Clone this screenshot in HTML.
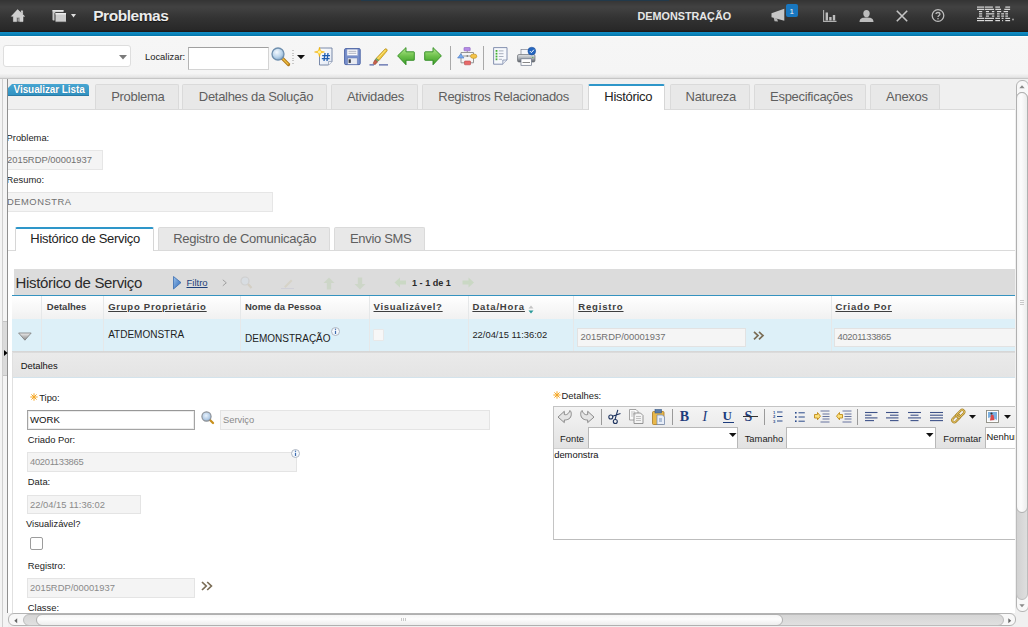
<!DOCTYPE html><html><head><meta charset="utf-8"><style>
html,body{margin:0;padding:0;width:1028px;height:627px;overflow:hidden;background:#fff;font-family:"Liberation Sans",sans-serif;}
.a{position:absolute;box-sizing:border-box;}
.t{position:absolute;line-height:1;white-space:nowrap;}
svg{overflow:visible}
</style></head><body>

<div class="a" style="left:0px;top:0px;width:1028px;height:32px;background:linear-gradient(#343434 0px,#424242 7px,#333 18px,#282828 30px,#1e1b1b 31px,#1e1b1b 32px)"></div>
<div class="a" style="left:361px;top:0px;width:308px;height:1px;background:#22394a"></div>
<div class="a" style="left:0px;top:32px;width:1028px;height:4px;background:linear-gradient(#1290c8,#0a80b6 60%,#0575a8)"></div>
<svg class="a" style="left:11px;top:9px" width="14" height="13" viewBox="0 0 14 13"><path d="M6.6 0.6 L13.6 7.3 L12 7.3 L12 12.6 L8.6 12.6 L8.6 8.6 L5.6 8.6 L5.6 12.6 L2.4 12.6 L2.4 7.3 L0.4 7.3 Z M10.2 1.8 L11.6 1.8 L11.6 5 L10.2 3.6 Z" fill="#cfcfcf" stroke="#e8e8e8" stroke-width="0.5"/><rect x="6.4" y="9.2" width="1.8" height="3.4" fill="#9a9a9a"/></svg>
<svg class="a" style="left:52px;top:9px" width="15" height="14" viewBox="0 0 15 14"><rect x="0.5" y="1" width="11" height="10.5" rx="0.8" fill="#c8c8c8"/><rect x="0.5" y="1" width="11" height="1.4" fill="#e6e6e6"/><rect x="3" y="3.6" width="11.5" height="9.6" rx="0.8" fill="#cdcdcd" stroke="#262626" stroke-width="0.9"/><rect x="3.5" y="4" width="10.5" height="1.5" fill="#ededed"/></svg>
<svg class="a" style="left:71px;top:14px" width="6" height="4" viewBox="0 0 6 4"><path d="M0 0 L5 0 L2.5 3.5 Z" fill="#ddd"/></svg>
<div class="t" style="left:93.2px;top:8.00px;font-size:15.5px;color:#ececec;font-weight:bold;letter-spacing:-0.45px;text-shadow:0 1px 1px #111">Problemas</div>
<div class="t" style="left:637.5px;top:11.00px;font-size:10.8px;color:#e6e6e6;font-weight:bold;">DEMONSTRAÇÃO</div>
<svg class="a" style="left:771px;top:8px" width="14" height="14" viewBox="0 0 14 14"><path d="M0.5 5.3 L13.3 0.7 L13.3 12.7 L0.5 9.3 Z" fill="#c6c6c6"/><path d="M2.6 9.6 L6 10.5 L7 13.6 L3.6 13.2 Z" fill="#b4b4b4"/></svg>
<div class="a" style="left:785.5px;top:4px;width:12.5px;height:13px;background:#1877c0;border-radius:2px"></div>
<div class="t" style="left:789.5px;top:8.00px;font-size:8px;color:#f4f4f4;">1</div>
<svg class="a" style="left:823px;top:10px" width="14" height="12" viewBox="0 0 14 12"><path d="M0.6 0 L0.6 11.4 L13.5 11.4" stroke="#b0b0b0" stroke-width="1.1" fill="none"/><rect x="2.6" y="2.5" width="2.4" height="8" fill="#bdbdbd"/><rect x="6.2" y="7" width="2.4" height="3.5" fill="#bdbdbd"/><rect x="9.8" y="5" width="2.4" height="5.5" fill="#bdbdbd"/></svg>
<svg class="a" style="left:858.5px;top:10px" width="15" height="12" viewBox="0 0 15 12"><ellipse cx="7.5" cy="3.6" rx="3.2" ry="3.6" fill="#bdbdbd"/><path d="M0.5 12 C0.5 8 4 7.5 7.5 7.5 C11 7.5 14.5 8 14.5 12 Z" fill="#bdbdbd"/></svg>
<svg class="a" style="left:896px;top:10px" width="12" height="12" viewBox="0 0 12 12"><path d="M0.8 0.8 L11.2 11.2 M11.2 0.8 L0.8 11.2" stroke="#c4c4c4" stroke-width="1.6"/></svg>
<svg class="a" style="left:930.5px;top:9px" width="14" height="13" viewBox="0 0 14 13"><circle cx="7" cy="6.5" r="5.8" stroke="#bdbdbd" stroke-width="1.3" fill="none"/><path d="M5 5 C5 3 9 3 9 5 C9 6.5 7 6.5 7 8" stroke="#bdbdbd" stroke-width="1.3" fill="none"/><circle cx="7" cy="9.8" r="0.8" fill="#bdbdbd"/></svg>
<svg class="a" style="left:977px;top:0px" width="38" height="22" viewBox="0 0 38 22"><rect x="0.0" y="6.50" width="7.1" height="1.2" fill="#dadada"/><rect x="7.8" y="6.50" width="8.1" height="1.2" fill="#dadada"/><rect x="18.3" y="6.50" width="4.7" height="1.2" fill="#dadada"/><rect x="28.3" y="6.50" width="4.8" height="1.2" fill="#dadada"/><rect x="0.0" y="8.75" width="7.1" height="1.2" fill="#dadada"/><rect x="7.8" y="8.75" width="9.2" height="1.2" fill="#dadada"/><rect x="18.3" y="8.75" width="5.7" height="1.2" fill="#dadada"/><rect x="27.3" y="8.75" width="5.8" height="1.2" fill="#dadada"/><rect x="2.0" y="11.00" width="3.2" height="1.2" fill="#dadada"/><rect x="8.9" y="11.00" width="3.1" height="1.2" fill="#dadada"/><rect x="14.9" y="11.00" width="2.4" height="1.2" fill="#dadada"/><rect x="20.0" y="11.00" width="4.2" height="1.2" fill="#dadada"/><rect x="26.6" y="11.00" width="4.4" height="1.2" fill="#dadada"/><rect x="2.0" y="13.25" width="3.2" height="1.2" fill="#dadada"/><rect x="8.9" y="13.25" width="8.4" height="1.2" fill="#dadada"/><rect x="20.0" y="13.25" width="2.7" height="1.2" fill="#dadada"/><rect x="24.2" y="13.25" width="2.9" height="1.2" fill="#dadada"/><rect x="28.3" y="13.25" width="2.7" height="1.2" fill="#dadada"/><rect x="2.0" y="15.50" width="3.2" height="1.2" fill="#dadada"/><rect x="8.9" y="15.50" width="3.1" height="1.2" fill="#dadada"/><rect x="14.9" y="15.50" width="2.4" height="1.2" fill="#dadada"/><rect x="20.0" y="15.50" width="2.7" height="1.2" fill="#dadada"/><rect x="24.2" y="15.50" width="2.9" height="1.2" fill="#dadada"/><rect x="28.3" y="15.50" width="2.7" height="1.2" fill="#dadada"/><rect x="0.0" y="17.75" width="7.1" height="1.2" fill="#dadada"/><rect x="7.8" y="17.75" width="9.2" height="1.2" fill="#dadada"/><rect x="18.3" y="17.75" width="4.7" height="1.2" fill="#dadada"/><rect x="24.6" y="17.75" width="2.0" height="1.2" fill="#dadada"/><rect x="28.3" y="17.75" width="4.8" height="1.2" fill="#dadada"/><rect x="0.0" y="20.00" width="7.1" height="1.2" fill="#dadada"/><rect x="7.8" y="20.00" width="8.1" height="1.2" fill="#dadada"/><rect x="18.3" y="20.00" width="4.7" height="1.2" fill="#dadada"/><rect x="25.1" y="20.00" width="1.0" height="1.2" fill="#dadada"/><rect x="28.3" y="20.00" width="4.8" height="1.2" fill="#dadada"/><circle cx="36" cy="19.5" r="0.9" fill="#aaa"/></svg>
<div class="a" style="left:0px;top:36px;width:1028px;height:43px;background:linear-gradient(#fff 0,#fff 1px,#f6f6f6 1px,#f5f5f5 37.5px,#e6e6e6 41px,#dadada 42px,#c6c6c6 42px)"></div>
<div class="a" style="left:3px;top:45px;width:128px;height:22px;background:#fff;border:1px solid #dedede;border-radius:3px"></div>
<svg class="a" style="left:119px;top:54.5px" width="8" height="5" viewBox="0 0 8 5"><path d="M0 0 L8 0 L4 4.5 Z" fill="#7a7a7a"/></svg>
<div class="t" style="left:145px;top:52.00px;font-size:9.4px;color:#222;">Localizar:</div>
<div class="a" style="left:188px;top:47px;width:81px;height:23px;background:#fff;border:1px solid #d4d4d4;border-top-color:#a0a0a0;border-left-color:#b4b4b4"></div>
<svg class="a" style="left:270.5px;top:46.5px" width="19" height="19" viewBox="0 0 19 19"><defs><radialGradient id="mg1" cx="0.4" cy="0.35" r="0.7"><stop offset="0" stop-color="#f4f9ff"/><stop offset="0.6" stop-color="#b9d3ea"/><stop offset="1" stop-color="#7fa3c6"/></radialGradient></defs>
    <path d="M11 11 L17.5 17.5" stroke="#b07818" stroke-width="3.2" stroke-linecap="round"/>
    <path d="M11.5 11.5 L17 17" stroke="#f0c040" stroke-width="1.4" stroke-linecap="round"/>
    <circle cx="7" cy="7" r="6" fill="url(#mg1)" stroke="#6f8fae" stroke-width="1.3"/></svg>
<div class="a" style="left:292px;top:50.0px;width:1.5px;height:1.0px;background:#c8c8c8"></div>
<div class="a" style="left:292px;top:52.5px;width:1.5px;height:1.0px;background:#c8c8c8"></div>
<div class="a" style="left:292px;top:55.0px;width:1.5px;height:1.0px;background:#c8c8c8"></div>
<div class="a" style="left:292px;top:57.5px;width:1.5px;height:1.0px;background:#c8c8c8"></div>
<div class="a" style="left:292px;top:60.0px;width:1.5px;height:1.0px;background:#c8c8c8"></div>
<div class="a" style="left:292px;top:62.5px;width:1.5px;height:1.0px;background:#c8c8c8"></div>
<svg class="a" style="left:297px;top:55px" width="8" height="5" viewBox="0 0 8 5"><path d="M0 0 L8 0 L4 4.3 Z" fill="#111"/></svg>
<svg class="a" style="left:313.5px;top:46.5px" width="20" height="19" viewBox="0 0 20 19"><defs><linearGradient id="pg" x1="0" y1="0" x2="1" y2="1"><stop offset="0" stop-color="#ffffff"/><stop offset="1" stop-color="#dfe6f2"/></linearGradient></defs>
    <path d="M5.5 1 L18 1 L18 14.5 L14.5 18 L5.5 18 Z" fill="url(#pg)" stroke="#6d7fa0" stroke-width="0.9"/>
    <path d="M14.5 18 L14.5 14.5 L18 14.5" fill="#f2f4f8" stroke="#8a98b0" stroke-width="0.7"/>
    <path d="M11 6 L10 14 M14 6 L13 14 M8.2 8.6 L16 8.6 M7.8 11.6 L15.6 11.6" stroke="#1e5cb0" stroke-width="1.3"/>
    <path d="M5.5 0.2 L6.6 3.9 L10.5 5 L6.6 6.1 L5.5 9.8 L4.4 6.1 L0.5 5 L4.4 3.9 Z" fill="#ffd21e" stroke="#f0a800" stroke-width="0.5"/>
    <circle cx="5.5" cy="5" r="1.6" fill="#fff3a0"/></svg>
<svg class="a" style="left:343.5px;top:48px" width="17" height="17.5" viewBox="0 0 17 17.5"><rect x="0.6" y="0.6" width="15.6" height="16" rx="1.2" fill="#7890cc" stroke="#4f66a6" stroke-width="1"/>
    <rect x="3" y="1.2" width="10.8" height="6.4" fill="#fbfbfd" stroke="#8a9ac4" stroke-width="0.5"/>
    <path d="M4.5 3.3 L12.3 3.3 M4.5 5.3 L12.3 5.3" stroke="#9aa0b0" stroke-width="0.8"/>
    <rect x="3.6" y="10" width="9.6" height="6.3" fill="#e8ebf2" stroke="#6a7cb4" stroke-width="0.5"/>
    <rect x="4.6" y="11.3" width="2.2" height="3.6" fill="#3a3f4a"/></svg>
<svg class="a" style="left:368.5px;top:46.5px" width="20" height="19" viewBox="0 0 20 19"><path d="M0.5 17.8 L5 17.8 M10 17.8 L19 17.8" stroke="#5566a8" stroke-width="1.3"/>
    <path d="M7 11.5 L16 2 C17 1 19 2.8 18 4 L10 13.5 Z" fill="#f0c838" stroke="#b08a20" stroke-width="0.7"/>
    <path d="M7.3 11.3 L9.8 13.3 L8.5 14.8 L6 12.8 Z" fill="#7ab070" stroke="#4a7a40" stroke-width="0.4"/>
    <path d="M6 12.8 L8.5 14.8 L7 16.8 C5.8 18.2 3.6 17 4.5 15.5 Z" fill="#c8604a" stroke="#8e3a28" stroke-width="0.6"/>
    <path d="M8.5 12 L16.5 3" stroke="#fae690" stroke-width="0.9"/></svg>
<svg class="a" style="left:396.5px;top:46.5px" width="18" height="19" viewBox="0 0 18 19"><defs><linearGradient id="ga" x1="0" y1="0" x2="0" y2="1"><stop offset="0" stop-color="#b4e890"/><stop offset="0.5" stop-color="#6cc04a"/><stop offset="1" stop-color="#3a9a28"/></linearGradient></defs>
    <path d="M0.6 8.8 L9 0.6 L9 4.8 L16.8 4.8 Q17.3 4.8 17.3 5.3 L17.3 12.8 Q17.3 13.3 16.8 13.3 L9 13.3 L9 17.8 Z" fill="url(#ga)" stroke="#2e8a20" stroke-width="0.9" stroke-linejoin="round"/></svg>
<svg class="a" style="left:423.5px;top:46.5px" width="18" height="19" viewBox="0 0 18 19"><path d="M17.4 8.8 L9 0.6 L9 4.8 L1.2 4.8 Q0.7 4.8 0.7 5.3 L0.7 12.8 Q0.7 13.3 1.2 13.3 L9 13.3 L9 17.8 Z" fill="url(#ga)" stroke="#2e8a20" stroke-width="0.9" stroke-linejoin="round"/></svg>
<div class="a" style="left:450px;top:46px;width:1.3000000000000114px;height:24px;background:#a9a9a9"></div>
<svg class="a" style="left:456.5px;top:46.5px" width="21" height="20" viewBox="0 0 21 20"><path d="M4 5.5 L16.5 5.5 L16.5 15.8 L4 15.8 Z M10.25 3.5 L10.25 5.5 M6 9 L14.5 9" stroke="#8c8c8c" stroke-width="0.9" fill="none"/>
    <circle cx="10.25" cy="9" r="0.7" fill="#555"/>
    <rect x="7" y="0.5" width="6.2" height="3.3" rx="0.5" fill="#b48ae6" stroke="#8a60c0" stroke-width="0.6"/>
    <path d="M0.6 11 L3.8 6.8 L7 11 Z" fill="#78aaf0" stroke="#4a78c0" stroke-width="0.6" stroke-linejoin="round"/>
    <ellipse cx="16.7" cy="9.2" rx="3.2" ry="2.2" fill="#f4c44a" stroke="#c09020" stroke-width="0.6"/>
    <rect x="7.5" y="14" width="6" height="3.8" rx="0.5" fill="#e86a6a" stroke="#b84a4a" stroke-width="0.6"/></svg>
<div class="a" style="left:483px;top:46px;width:1.3000000000000114px;height:24px;background:#a9a9a9"></div>
<svg class="a" style="left:492.5px;top:47.3px" width="15" height="18" viewBox="0 0 15 18"><path d="M0.6 0.6 L14 0.6 L14 13 L9.8 17.2 L0.6 17.2 Z" fill="#f6f8fc" stroke="#7886a8" stroke-width="0.9"/>
    <path d="M9.8 17.2 L9.8 13 L14 13" fill="#e4e8f0" stroke="#7886a8" stroke-width="0.7"/>
    <rect x="2.6" y="3" width="1.8" height="1.8" fill="#44b030"/><rect x="2.6" y="5.8" width="1.8" height="1.8" fill="#44b030"/><rect x="2.6" y="8.6" width="1.8" height="1.8" fill="#44b030"/><rect x="2.6" y="11.4" width="1.8" height="1.8" fill="#44b030"/>
    <path d="M5.8 3.9 L10.5 3.9 M5.8 6.7 L10.5 6.7 M5.8 9.5 L10.5 9.5 M5.8 12.3 L9 12.3" stroke="#a0a8b8" stroke-width="0.9"/></svg>
<svg class="a" style="left:516.5px;top:46.5px" width="19" height="19" viewBox="0 0 19 19"><defs><linearGradient id="prg" x1="0" y1="0" x2="0" y2="1"><stop offset="0" stop-color="#e2e4e6"/><stop offset="0.5" stop-color="#a9aeb4"/><stop offset="1" stop-color="#5c6168"/></linearGradient></defs>
    <rect x="4" y="2.5" width="10.5" height="6.5" fill="#f4f6fa" stroke="#7a8090" stroke-width="0.7"/>
    <rect x="0.5" y="7.5" width="17.5" height="7.5" rx="1.5" fill="url(#prg)" stroke="#6a6e74" stroke-width="0.7"/>
    <circle cx="15.8" cy="10.3" r="0.6" fill="#44b030"/>
    <rect x="4" y="11.8" width="10.5" height="6.5" fill="#fff" stroke="#6a7488" stroke-width="0.7"/>
    <path d="M5.5 15.5 L13 15.5" stroke="#555" stroke-width="0.7"/>
    <circle cx="14.8" cy="4.1" r="3.9" fill="#2466c0" stroke="#1a4890" stroke-width="0.5"/>
    <path d="M12.9 4.1 L14.4 5.6 L16.9 2.7" stroke="#fff" stroke-width="1" fill="none"/></svg>
<div class="a" style="left:8px;top:79px;width:1007px;height:31px;background:#f0f0f0"></div>
<div class="a" style="left:8px;top:109px;width:1007px;height:1px;background:#dadada"></div>
<div class="a" style="left:0px;top:79px;width:8px;height:548px;background:#f4f4f4"></div>
<div class="a" style="left:2px;top:79px;width:1px;height:548px;background:#cfcfcf"></div>
<div class="a" style="left:3px;top:321px;width:4px;height:55px;background:#dadada"></div>
<div class="a" style="left:3px;top:321px;width:4px;height:1px;background:#c4c4c4"></div>
<div class="a" style="left:3px;top:375px;width:4px;height:1px;background:#c4c4c4"></div>
<div class="a" style="left:7px;top:79px;width:1px;height:534px;background:#8f8f8f"></div>
<svg class="a" style="left:3.5px;top:350px" width="4" height="6" viewBox="0 0 4 6"><path d="M0 0 L3.6 3 L0 6 Z" fill="#000"/></svg>
<div class="a" style="left:8px;top:84px;width:81px;height:12px;background:linear-gradient(#48a6d2,#3192c2);border-bottom:1px solid #2a7aa5;border-radius:0 3px 0 0;clip-path:polygon(4px 0,100% 0,100% 100%,0 100%,0 4px)"></div>
<div class="t" style="left:13.6px;top:85.00px;font-size:10px;color:#fff;font-weight:bold;letter-spacing:-0.1px;text-shadow:0 0 1px #2a6f96">Visualizar Lista</div>
<div class="a" style="left:95px;top:84px;width:84px;height:25px;background:#e8e8e8;border:1px solid #dadada;border-bottom:none;border-radius:2px 2px 0 0"></div>
<div class="t" style="left:111.2px;top:90.00px;font-size:13px;color:#5f5f5f;letter-spacing:-0.3px">Problema</div>
<div class="a" style="left:182px;top:84px;width:145px;height:25px;background:#e8e8e8;border:1px solid #dadada;border-bottom:none;border-radius:2px 2px 0 0"></div>
<div class="t" style="left:198.8px;top:90.00px;font-size:13px;color:#5f5f5f;letter-spacing:-0.3px">Detalhes da Solução</div>
<div class="a" style="left:331px;top:84px;width:87px;height:25px;background:#e8e8e8;border:1px solid #dadada;border-bottom:none;border-radius:2px 2px 0 0"></div>
<div class="t" style="left:347.0px;top:90.00px;font-size:13px;color:#5f5f5f;letter-spacing:-0.3px">Atividades</div>
<div class="a" style="left:422px;top:84px;width:161px;height:25px;background:#e8e8e8;border:1px solid #dadada;border-bottom:none;border-radius:2px 2px 0 0"></div>
<div class="t" style="left:438.3px;top:90.00px;font-size:13px;color:#5f5f5f;letter-spacing:-0.3px">Registros Relacionados</div>
<div class="a" style="left:588px;top:84px;width:77px;height:26px;background:#fff;border:1px solid #d6d6d6;border-bottom:none;border-top:2px solid #2e96c9;border-radius:2px 2px 0 0"></div>
<div class="t" style="left:604.3px;top:90.00px;font-size:13px;color:#222;letter-spacing:-0.3px">Histórico</div>
<div class="a" style="left:670px;top:84px;width:80px;height:25px;background:#e8e8e8;border:1px solid #dadada;border-bottom:none;border-radius:2px 2px 0 0"></div>
<div class="t" style="left:685.5999999999999px;top:90.00px;font-size:13px;color:#5f5f5f;letter-spacing:-0.3px">Natureza</div>
<div class="a" style="left:754px;top:84px;width:112px;height:25px;background:#e8e8e8;border:1px solid #dadada;border-bottom:none;border-radius:2px 2px 0 0"></div>
<div class="t" style="left:770.0999999999999px;top:90.00px;font-size:13px;color:#5f5f5f;letter-spacing:-0.3px">Especificações</div>
<div class="a" style="left:870px;top:84px;width:70px;height:25px;background:#e8e8e8;border:1px solid #dadada;border-bottom:none;border-radius:2px 2px 0 0"></div>
<div class="t" style="left:886.0999999999999px;top:90.00px;font-size:13px;color:#5f5f5f;letter-spacing:-0.3px">Anexos</div>
<div class="a" style="left:8px;top:110px;width:1007px;height:503px;overflow:hidden">
<div class="a" style="left:-8px;top:-110px;width:1028px;height:627px">
<div class="t" style="left:6.5px;top:133.00px;font-size:9.4px;color:#222;">Problema:</div>
<div class="a" style="left:6px;top:150px;width:97px;height:20px;background:#f4f4f4;border:1px solid #e6e6e6"></div>
<div class="t" style="left:7px;top:155.00px;font-size:9.4px;color:#707070;">2015RDP/00001937</div>
<div class="t" style="left:6.5px;top:175.00px;font-size:9.4px;color:#222;">Resumo:</div>
<div class="a" style="left:6px;top:192px;width:267px;height:20px;background:#f4f4f4;border:1px solid #e6e6e6"></div>
<div class="t" style="left:7px;top:197.00px;font-size:9.4px;color:#707070;letter-spacing:0.5px">DEMONSTRA</div>
</div></div>
<div class="a" style="left:8px;top:250px;width:1007px;height:1px;background:#dadada"></div>
<div class="a" style="left:15px;top:227px;width:139px;height:24px;background:#fff;border:1px solid #d6d6d6;border-bottom:none;border-top:2px solid #2e96c9;border-radius:2px 2px 0 0"></div>
<div class="t" style="left:30.3px;top:232.00px;font-size:13px;color:#222;letter-spacing:-0.3px">Histórico de Serviço</div>
<div class="a" style="left:158px;top:227px;width:172px;height:23px;background:#e8e8e8;border:1px solid #dadada;border-bottom:none;border-radius:2px 2px 0 0"></div>
<div class="t" style="left:173.2px;top:232.00px;font-size:13px;color:#5f5f5f;letter-spacing:-0.28px">Registro de Comunicação</div>
<div class="a" style="left:334px;top:227px;width:91px;height:23px;background:#e8e8e8;border:1px solid #dadada;border-bottom:none;border-radius:2px 2px 0 0"></div>
<div class="t" style="left:350px;top:232.00px;font-size:13px;color:#5f5f5f;letter-spacing:-0.32px">Envio SMS</div>
<div class="a" style="left:14px;top:269px;width:1001px;height:26px;background:#dcdcdc"></div>
<div class="a" style="left:12px;top:294.6px;width:1003px;height:1.0px;background:#3593c0"></div>
<div class="t" style="left:15.6px;top:275.00px;font-size:15px;color:#2b2b2b;letter-spacing:-0.35px">Histórico de Serviço</div>
<svg class="a" style="left:172.5px;top:275.5px" width="9" height="14" viewBox="0 0 9 14"><defs><linearGradient id="fg" x1="0" y1="0" x2="1" y2="1"><stop offset="0" stop-color="#9cc4ee"/><stop offset="1" stop-color="#2a64b4"/></linearGradient></defs><path d="M0.5 0.5 L8 6.6 L0.5 13 Z" fill="url(#fg)" stroke="#3a6cb0" stroke-width="0.8"/></svg>
<div class="t" style="left:186.5px;top:278.00px;font-size:9.5px;color:#1d3f7a;text-decoration:underline">Filtro</div>
<svg class="a" style="left:222px;top:278.5px" width="6" height="8" viewBox="0 0 6 8"><path d="M0.8 0.8 L4.3 3.8 L0.8 6.8" stroke="#a0a0a0" stroke-width="1" fill="none"/></svg>
<svg class="a" style="left:239.5px;top:276px" width="12" height="13" viewBox="0 0 12 13"><circle cx="5" cy="5" r="4" fill="#d8dde2" stroke="#cfcfcf" stroke-width="1.2"/><path d="M8 8 L11.5 12" stroke="#d4cfc4" stroke-width="2.2"/></svg>
<svg class="a" style="left:281px;top:277px" width="13" height="12" viewBox="0 0 13 12"><path d="M3 9.5 L10 2.5 L11.5 4 L4.5 11 Z" fill="#d6d3c8"/><path d="M0 11.5 L13 11.5" stroke="#d0d0d8"/></svg>
<svg class="a" style="left:323px;top:277px" width="12" height="13" viewBox="0 0 12 13"><path d="M6 0.5 L11.5 6 L8.2 6 L8.2 12.5 L3.8 12.5 L3.8 6 L0.5 6 Z" fill="#cdd6c8"/></svg>
<svg class="a" style="left:353.5px;top:277px" width="12" height="13" viewBox="0 0 12 13"><path d="M6 12.5 L11.5 7 L8.2 7 L8.2 0.5 L3.8 0.5 L3.8 7 L0.5 7 Z" fill="#cdd6c8"/></svg>
<svg class="a" style="left:394px;top:277px" width="12.5" height="11" viewBox="0 0 12.5 11"><path d="M0.5 5.5 L6 0.5 L6 3.5 L12 3.5 L12 7.5 L6 7.5 L6 10.5 Z" fill="#cad8c4"/></svg>
<div class="t" style="left:412px;top:279.00px;font-size:9.1px;color:#2a2a2a;font-weight:bold;">1 - 1 de 1</div>
<svg class="a" style="left:461.5px;top:277px" width="12.5" height="11" viewBox="0 0 12.5 11"><path d="M12 5.5 L6.5 0.5 L6.5 3.5 L0.5 3.5 L0.5 7.5 L6.5 7.5 L6.5 10.5 Z" fill="#cad8c4"/></svg>
<div class="a" style="left:12px;top:295.6px;width:1003px;height:23.399999999999977px;background:linear-gradient(#ffffff,#f1f1f1)"></div>
<div class="a" style="left:12px;top:319px;width:1003px;height:32px;background:#ddf0f8"></div>
<div class="a" style="left:12px;top:351px;width:1003px;height:2px;background:linear-gradient(#d4d4d4,#dedede)"></div>
<div class="a" style="left:41px;top:296px;width:1px;height:55px;background:#e6e8e9"></div>
<div class="a" style="left:103px;top:296px;width:1px;height:55px;background:#e6e8e9"></div>
<div class="a" style="left:240px;top:296px;width:1px;height:55px;background:#e6e8e9"></div>
<div class="a" style="left:369px;top:296px;width:1px;height:55px;background:#e6e8e9"></div>
<div class="a" style="left:468px;top:296px;width:1px;height:55px;background:#e6e8e9"></div>
<div class="a" style="left:573px;top:296px;width:1px;height:55px;background:#e6e8e9"></div>
<div class="a" style="left:831px;top:296px;width:1px;height:55px;background:#e6e8e9"></div>
<div class="t" style="left:46.8px;top:302.00px;font-size:9.5px;color:#3e3e3e;font-weight:bold;">Detalhes</div>
<div class="t" style="left:108.2px;top:302.00px;font-size:9.5px;color:#3e3e3e;font-weight:bold;letter-spacing:0.75px;text-decoration:underline">Grupo Proprietário</div>
<div class="t" style="left:245px;top:302.00px;font-size:9.5px;color:#3e3e3e;font-weight:bold;">Nome da Pessoa</div>
<div class="t" style="left:373.5px;top:302.00px;font-size:9.5px;color:#3e3e3e;font-weight:bold;letter-spacing:0.74px;text-decoration:underline">Visualizável?</div>
<div class="t" style="left:472.4px;top:302.00px;font-size:9.5px;color:#3e3e3e;font-weight:bold;letter-spacing:0.85px;text-decoration:underline">Data/Hora</div>
<svg class="a" style="left:527.5px;top:305px" width="6" height="9" viewBox="0 0 6 9"><path d="M0.5 3.5 L3 0.5 L5.5 3.5 Z" fill="#c4c4c4"/><path d="M0.5 5.5 L3 8.5 L5.5 5.5 Z" fill="#2a9a9a"/></svg>
<div class="t" style="left:578.2px;top:302.00px;font-size:9.5px;color:#3e3e3e;font-weight:bold;letter-spacing:0.85px;text-decoration:underline">Registro</div>
<div class="t" style="left:835.4px;top:302.00px;font-size:9.5px;color:#3e3e3e;font-weight:bold;letter-spacing:0.8px;text-decoration:underline">Criado Por</div>
<svg class="a" style="left:18px;top:331.5px" width="14" height="9" viewBox="0 0 14 9"><defs><linearGradient id="tri" x1="0" y1="0" x2="0" y2="1"><stop offset="0" stop-color="#f0f0f0"/><stop offset="0.5" stop-color="#b8b8b8"/><stop offset="1" stop-color="#8a8a8a"/></linearGradient></defs><path d="M0.6 1 L13.2 1 L6.9 8.2 Z" fill="url(#tri)" stroke="#7a7a7a" stroke-width="0.8" stroke-linejoin="round"/></svg>
<div class="t" style="left:108.2px;top:330.00px;font-size:10px;color:#1e1e1e;">ATDEMONSTRA</div>
<div class="t" style="left:245px;top:334.00px;font-size:10px;color:#1e1e1e;">DEMONSTRAÇÃO</div>
<svg class="a" style="left:331.3px;top:327px" width="9" height="9" viewBox="0 0 9 9"><circle cx="4.5" cy="4.5" r="4" fill="#f4f8fc" stroke="#a8b0bc" stroke-width="0.9"/><path d="M4.5 3.8 L4.5 7" stroke="#3a6ab0" stroke-width="1.2"/><circle cx="4.5" cy="2.3" r="0.7" fill="#3a6ab0"/></svg>
<div class="a" style="left:373px;top:329px;width:11px;height:11.5px;background:#f7f7f7;border:1px solid #e8e8e8;border-radius:1px"></div>
<div class="t" style="left:472.4px;top:330.00px;font-size:9.4px;color:#1e1e1e;">22/04/15 11:36:02</div>
<div class="a" style="left:577px;top:327.5px;width:168.5px;height:19.5px;background:#f5f5f5;border:1px solid #e2e2e2"></div>
<div class="t" style="left:580.5px;top:332.00px;font-size:9.4px;color:#707070;">2015RDP/00001937</div>
<svg class="a" style="left:753px;top:330.5px" width="12" height="10" viewBox="0 0 12 10"><path d="M1 0.8 L5 4.6 L1 8.4 M6 0.8 L10 4.6 L6 8.4" stroke="#7a6c55" stroke-width="1.7" fill="none"/></svg>
<div class="a" style="left:834px;top:327.5px;width:181px;height:19.5px;background:#f5f5f5;border:1px solid #e2e2e2;border-right:none"></div>
<div class="t" style="left:837.5px;top:332.00px;font-size:9.4px;color:#707070;letter-spacing:-0.3px">40201133865</div>
<div class="a" style="left:12px;top:353px;width:1003px;height:25px;background:linear-gradient(#eaeaea,#e4e4e4)"></div>
<div class="a" style="left:12px;top:377px;width:1003px;height:1px;background:#d3e3ec"></div>
<div class="t" style="left:20.7px;top:361.00px;font-size:9.4px;color:#111;">Detalhes</div>
<div class="a" style="left:12px;top:352px;width:1px;height:261px;background:#e0e0e0"></div>
<svg class="a" style="left:29.5px;top:393px" width="8" height="8" viewBox="0 0 8 8"><g stroke="#f5a623" stroke-width="1"><path d="M4 0.3 L4 7.7 M0.3 4 L7.7 4 M1.4 1.4 L6.6 6.6 M6.6 1.4 L1.4 6.6"/></g></svg>
<div class="t" style="left:39.2px;top:393.00px;font-size:9.4px;color:#222;">Tipo:</div>
<div class="a" style="left:26.5px;top:410px;width:168.5px;height:20px;background:#fff;border:1px solid #a4a4a4;border-top-color:#989898;box-shadow:inset 0 0 0 1px #ececec"></div>
<div class="t" style="left:30px;top:415.00px;font-size:9.6px;color:#111;">WORK</div>
<svg class="a" style="left:200.5px;top:410.5px" width="14" height="14" viewBox="0 0 14 14"><defs><radialGradient id="mg2" cx="0.45" cy="0.4" r="0.6"><stop offset="0" stop-color="#e8f2fc"/><stop offset="0.7" stop-color="#b4cce6"/><stop offset="1" stop-color="#90b0d0"/></radialGradient></defs><path d="M8 8 L12 12" stroke="#c8901c" stroke-width="2.3" stroke-linecap="round"/><circle cx="5.5" cy="5.5" r="4.6" fill="url(#mg2)" stroke="#8a8e94" stroke-width="1.1"/></svg>
<div class="a" style="left:219.5px;top:410px;width:270.5px;height:20px;background:#f4f4f4;border:1px solid #e4e4e4"></div>
<div class="t" style="left:223px;top:415.00px;font-size:9.4px;color:#8a8a8a;">Serviço</div>
<div class="t" style="left:27.8px;top:435.00px;font-size:9.4px;color:#222;">Criado Por:</div>
<div class="a" style="left:26.5px;top:452px;width:270.0px;height:20px;background:#f4f4f4;border:1px solid #e4e4e4"></div>
<div class="t" style="left:30px;top:457.00px;font-size:9.4px;color:#8a8a8a;letter-spacing:-0.3px">40201133865</div>
<svg class="a" style="left:291px;top:449px" width="9" height="9" viewBox="0 0 9 9"><circle cx="4.5" cy="4.5" r="4" fill="#f4f8fc" stroke="#a8b0bc" stroke-width="0.9"/><path d="M4.5 3.8 L4.5 7" stroke="#3a6ab0" stroke-width="1.2"/><circle cx="4.5" cy="2.3" r="0.7" fill="#3a6ab0"/></svg>
<div class="t" style="left:27.8px;top:477.00px;font-size:9.4px;color:#222;">Data:</div>
<div class="a" style="left:26.5px;top:494.5px;width:114.5px;height:19.5px;background:#f4f4f4;border:1px solid #e4e4e4"></div>
<div class="t" style="left:30px;top:500.00px;font-size:9.4px;color:#8a8a8a;">22/04/15 11:36:02</div>
<div class="t" style="left:26px;top:519.00px;font-size:9.4px;color:#222;">Visualizável?</div>
<div class="a" style="left:29.5px;top:537px;width:13.0px;height:13px;background:#fff;border:1px solid #9c9c9c;border-radius:2px"></div>
<div class="t" style="left:27.8px;top:561.00px;font-size:9.4px;color:#222;">Registro:</div>
<div class="a" style="left:26.5px;top:578px;width:168.5px;height:20px;background:#f4f4f4;border:1px solid #e4e4e4"></div>
<div class="t" style="left:30px;top:583.00px;font-size:9.4px;color:#8a8a8a;">2015RDP/00001937</div>
<svg class="a" style="left:201px;top:581px" width="12" height="10" viewBox="0 0 12 10"><path d="M1 1 L5.2 5 L1 9 M6.2 1 L10.4 5 L6.2 9" stroke="#7a6c55" stroke-width="1.7" fill="none"/></svg>
<div class="t" style="left:27.8px;top:603.00px;font-size:9.4px;color:#222;">Classe:</div>
<svg class="a" style="left:552.5px;top:391px" width="8" height="8" viewBox="0 0 8 8"><g stroke="#f5a623" stroke-width="1"><path d="M4 0.3 L4 7.7 M0.3 4 L7.7 4 M1.4 1.4 L6.6 6.6 M6.6 1.4 L1.4 6.6"/></g></svg>
<div class="t" style="left:561.6px;top:391.00px;font-size:9.4px;color:#222;">Detalhes:</div>
<div class="a" style="left:553px;top:406px;width:462px;height:134px;background:#fff;border:1px solid #c4c4c4;border-right:none;border-bottom-color:#bdbdbd"></div>
<div class="a" style="left:554px;top:407px;width:461px;height:41px;background:linear-gradient(#f4f4f4,#ececec 45%,#e2e2e2)"></div>
<div class="a" style="left:554px;top:447.5px;width:461px;height:1.0px;background:#d0d0d0"></div>
<div class="t" style="left:560px;top:434.00px;font-size:9.4px;color:#222;">Fonte</div>
<div class="a" style="left:587.5px;top:426.5px;width:150.5px;height:21.5px;background:#fff;border:1px solid #b8b8b8;border-bottom:none"></div>
<svg class="a" style="left:728.5px;top:432.5px" width="7.5" height="4.5" viewBox="0 0 7.5 4.5"><path d="M0 0 L7.5 0 L3.75 4 Z" fill="#111"/></svg>
<div class="t" style="left:744.7px;top:434.00px;font-size:9.4px;color:#222;">Tamanho</div>
<div class="a" style="left:785.5px;top:426.5px;width:150.0px;height:21.5px;background:#fff;border:1px solid #b8b8b8;border-bottom:none"></div>
<svg class="a" style="left:926px;top:432.5px" width="7.5" height="4.5" viewBox="0 0 7.5 4.5"><path d="M0 0 L7.5 0 L3.75 4 Z" fill="#111"/></svg>
<div class="t" style="left:943.3px;top:434.00px;font-size:9.4px;color:#222;">Formatar</div>
<div class="a" style="left:984.5px;top:426.5px;width:30.5px;height:21.5px;background:#fff;border:1px solid #b8b8b8;border-bottom:none;border-right:none"></div>
<div class="t" style="left:986.5px;top:432.00px;font-size:9.4px;color:#111;">Nenhum</div>
<div class="t" style="left:554.2px;top:450.00px;font-size:9.4px;color:#111;">demonstra</div>
<svg class="a" style="left:557px;top:409px" width="16" height="15" viewBox="0 0 16 15"><path d="M1 8.1 L7.3 2.3 L7.3 5.5 C9 6.2 11.5 5.5 12.9 1.5 C15 3 14.8 8 12 9.8 C10.5 10.8 8.5 11 7.3 11 L7.3 13.6 Z" fill="#e4e4e4" stroke="#858585" stroke-width="0.95" stroke-linejoin="round"/></svg>
<svg class="a" style="left:578.5px;top:409px" width="16" height="15" viewBox="0 0 16 15"><g transform="translate(16,0) scale(-1,1)"><path d="M1 8.1 L7.3 2.3 L7.3 5.5 C9 6.2 11.5 5.5 12.9 1.5 C15 3 14.8 8 12 9.8 C10.5 10.8 8.5 11 7.3 11 L7.3 13.6 Z" fill="#e4e4e4" stroke="#858585" stroke-width="0.95" stroke-linejoin="round"/></g></svg>
<div class="a" style="left:600.5px;top:408.5px;width:1.0px;height:16.0px;background:#9a9a9a"></div>
<svg class="a" style="left:608px;top:409px" width="13" height="15" viewBox="0 0 13 15"><circle cx="2.8" cy="8" r="2" fill="none" stroke="#1f3560" stroke-width="1.1"/><circle cx="7.3" cy="12.5" r="2" fill="none" stroke="#1f3560" stroke-width="1.1"/>
    <path d="M4.5 7.3 L12.5 4.5 M7 10.6 L9.8 0.8" stroke="#1f3560" stroke-width="1.1"/></svg>
<svg class="a" style="left:629px;top:409px" width="15" height="15" viewBox="0 0 15 15"><path d="M0.5 0.5 L7 0.5 L9 2.5 L9 11 L0.5 11 Z" fill="#fafafa" stroke="#9a9a9a" stroke-width="0.9"/>
    <path d="M5 4 L11.5 4 L14 6.5 L14 14.5 L5 14.5 Z" fill="#f4f4f4" stroke="#8a8a8a" stroke-width="0.9"/>
    <path d="M2 3 L6 3 M2 5 L7 5 M2 7 L4 7 M7 7.5 L12 7.5 M7 9.5 L12 9.5 M7 11.5 L12 11.5" stroke="#aaa" stroke-width="0.7"/></svg>
<svg class="a" style="left:651.5px;top:408.5px" width="13" height="16" viewBox="0 0 13 16"><rect x="0.5" y="2.5" width="11.5" height="13" rx="1" fill="#e9b84a" stroke="#a97a22" stroke-width="0.8"/>
    <rect x="3" y="0.5" width="6.5" height="3.5" fill="#5a7ca8" stroke="#3a5a88" stroke-width="0.6"/>
    <path d="M5 6 L10.5 6 L12.5 8 L12.5 15.5 L5 15.5 Z" fill="#e8eef8" stroke="#6a84b0" stroke-width="0.7"/>
    <path d="M7 10 L10 10 M7 12 L10 12" stroke="#5a7ca8" stroke-width="0.8"/></svg>
<div class="a" style="left:671.5px;top:408.5px;width:1.0px;height:16.0px;background:#9a9a9a"></div>
<div class="t" style="left:679.8px;top:409.65px;font-size:14px;color:#1d3c7c;font-weight:bold;font-family:'Liberation Serif',serif">B</div>
<div class="t" style="left:702.5px;top:409.65px;font-size:14px;color:#1d3c7c;font-family:'Liberation Serif',serif;font-style:italic">I</div>
<div class="t" style="left:722.5px;top:408.50px;font-size:13px;color:#1d3c7c;font-weight:bold;font-family:'Liberation Serif',serif">U</div>
<div class="a" style="left:723px;top:421.5px;width:11px;height:1.0px;background:#1d3c7c"></div>
<div class="t" style="left:744.5px;top:410.15px;font-size:14px;color:#1d3c7c;font-weight:bold;font-family:'Liberation Serif',serif">S</div>
<div class="a" style="left:743px;top:415.5px;width:15px;height:1.1999999999999886px;background:#333"></div>
<div class="a" style="left:764px;top:409px;width:1px;height:15.5px;background:#9a9a9a"></div>
<svg class="a" style="left:773px;top:410px" width="10" height="13" viewBox="0 0 10 13"><text x="0" y="4" font-size="4.2" font-family="Liberation Sans" font-weight="bold" fill="#2a4a8a">1</text><text x="0" y="8.4" font-size="4.2" font-family="Liberation Sans" font-weight="bold" fill="#2a4a8a">2</text><text x="0" y="12.8" font-size="4.2" font-family="Liberation Sans" font-weight="bold" fill="#2a4a8a">3</text>
    <path d="M4 2 L9.5 2 M4 6.5 L9.5 6.5 M4 11 L9.5 11" stroke="#2a4a8a" stroke-width="1"/></svg>
<svg class="a" style="left:795px;top:410.5px" width="10" height="12" viewBox="0 0 10 12"><rect x="0" y="1" width="1.6" height="1.6" fill="#2a4a8a"/><rect x="0" y="5.2" width="1.6" height="1.6" fill="#2a4a8a"/><rect x="0" y="9.4" width="1.6" height="1.6" fill="#2a4a8a"/>
    <path d="M3.5 1.8 L9.8 1.8 M3.5 6 L9.8 6 M3.5 10.2 L9.8 10.2" stroke="#2a4a8a" stroke-width="1"/></svg>
<svg class="a" style="left:813.5px;top:410px" width="16" height="13" viewBox="0 0 16 13"><path d="M0.5 4.5 L3.5 4.5 L3.5 2.5 L6.5 6.2 L3.5 9.8 L3.5 8 L0.5 8 Z" fill="#fbe07a" stroke="#c08a18" stroke-width="0.9"/>
    <path d="M6.5 1 L15.5 1 M8.5 4 L15.5 4 M8.5 6.5 L15.5 6.5 M8.5 9 L15.5 9 M6.5 12 L15.5 12" stroke="#44548a" stroke-width="0.8"/></svg>
<svg class="a" style="left:835.5px;top:410px" width="16" height="13" viewBox="0 0 16 13"><path d="M6.5 4.5 L3.5 4.5 L3.5 2.5 L0.5 6.2 L3.5 9.8 L3.5 8 L6.5 8 Z" fill="#fbe07a" stroke="#c08a18" stroke-width="0.9"/>
    <path d="M6.5 1 L15.5 1 M8.5 4 L15.5 4 M8.5 6.5 L15.5 6.5 M8.5 9 L15.5 9 M6.5 12 L15.5 12" stroke="#44548a" stroke-width="0.8"/></svg>
<div class="a" style="left:857px;top:409px;width:1px;height:15.5px;background:#9a9a9a"></div>
<svg class="a" style="left:865px;top:410.5px" width="14" height="12" viewBox="0 0 14 12"><path d="M0 1.5 L12.5 1.5" stroke="#3e5288" stroke-width="1.1"/><path d="M0 4.2 L6.5 4.2" stroke="#3e5288" stroke-width="1.1"/><path d="M0 6.9 L12.5 6.9" stroke="#3e5288" stroke-width="1.1"/><path d="M0 9.6 L9 9.6" stroke="#3e5288" stroke-width="1.1"/></svg>
<svg class="a" style="left:886px;top:410.5px" width="14" height="12" viewBox="0 0 14 12"><path d="M0 1.5 L12.5 1.5" stroke="#3e5288" stroke-width="1.1"/><path d="M4 4.2 L12.5 4.2" stroke="#3e5288" stroke-width="1.1"/><path d="M0 6.9 L12.5 6.9" stroke="#3e5288" stroke-width="1.1"/><path d="M4 9.6 L12.5 9.6" stroke="#3e5288" stroke-width="1.1"/></svg>
<svg class="a" style="left:908px;top:410.5px" width="14" height="12" viewBox="0 0 14 12"><path d="M0 1.5 L13 1.5" stroke="#3e5288" stroke-width="1.1"/><path d="M2.5 4.2 L10.5 4.2" stroke="#3e5288" stroke-width="1.1"/><path d="M0 6.9 L13 6.9" stroke="#3e5288" stroke-width="1.1"/><path d="M2.5 9.6 L10.5 9.6" stroke="#3e5288" stroke-width="1.1"/></svg>
<svg class="a" style="left:929.5px;top:410.5px" width="14" height="12" viewBox="0 0 14 12"><path d="M0 1.5 L13 1.5" stroke="#3e5288" stroke-width="1.1"/><path d="M0 4.2 L13 4.2" stroke="#3e5288" stroke-width="1.1"/><path d="M0 6.9 L13 6.9" stroke="#3e5288" stroke-width="1.1"/><path d="M0 9.6 L13 9.6" stroke="#3e5288" stroke-width="1.1"/></svg>
<svg class="a" style="left:950.5px;top:409px" width="15" height="14" viewBox="0 0 15 14"><g transform="rotate(-45 7.3 7)" fill="none">
    <rect x="-0.5" y="5" width="9" height="4.2" rx="2" stroke="#a8842a" stroke-width="2.2"/><rect x="-0.5" y="5" width="9" height="4.2" rx="2" stroke="#f0d070" stroke-width="0.9"/>
    <rect x="6" y="4.8" width="9" height="4.2" rx="2" stroke="#a8842a" stroke-width="2.2"/><rect x="6" y="4.8" width="9" height="4.2" rx="2" stroke="#f0d070" stroke-width="0.9"/></g></svg>
<svg class="a" style="left:968.8px;top:415px" width="7.2" height="4" viewBox="0 0 7.2 4"><path d="M0 0 L7 0 L3.5 3.8 Z" fill="#111"/></svg>
<svg class="a" style="left:986px;top:410px" width="13" height="13" viewBox="0 0 13 13"><rect x="0.5" y="0.5" width="12" height="12" fill="#fff" stroke="#8a8a80" stroke-width="0.9"/><rect x="2" y="2" width="9" height="9" fill="#7ab0e0"/><path d="M2 11 L2 8 L5 7 L11 10 L11 11 Z" fill="#eef2f6"/><path d="M4 10.5 L5 4.5 L7.5 5 L8.5 10 Z" fill="#d84848"/><circle cx="5.5" cy="3.5" r="1.1" fill="#333"/></svg>
<svg class="a" style="left:1003.9px;top:415px" width="7.2" height="4" viewBox="0 0 7.2 4"><path d="M0 0 L7 0 L3.5 3.8 Z" fill="#111"/></svg>
<div class="a" style="left:1015px;top:79px;width:13px;height:534px;background:#f0f0f0"></div>
<div class="a" style="left:1015.5px;top:79.5px;width:13.0px;height:532.0px;background:#f8f8f8;border:1px solid #b4b4b4;border-radius:6px"></div>
<div class="a" style="left:1016px;top:92px;width:12px;height:507.5px;background:linear-gradient(90deg,#d2d2d2,#dedede);border:1px solid #bcbcbc;border-radius:6px"></div>
<div class="a" style="left:1016px;top:92px;width:12px;height:421px;background:linear-gradient(90deg,#f4f4f4,#fcfcfc 40%,#ececec);border:1px solid #b0b0b0;border-radius:6px"></div>
<div class="a" style="left:1020px;top:300px;width:4px;height:1px;background:#c8c8c8"></div>
<div class="a" style="left:1020px;top:302px;width:4px;height:1px;background:#c8c8c8"></div>
<div class="a" style="left:1020px;top:304px;width:4px;height:1px;background:#c8c8c8"></div>
<svg class="a" style="left:1019px;top:85px" width="6" height="3.5" viewBox="0 0 6 3.5"><path d="M0.3 3.2 L3 0.3 L5.7 3.2 Z" fill="#8a8a8a"/></svg>
<svg class="a" style="left:1019px;top:603.5px" width="6" height="3.5" viewBox="0 0 6 3.5"><path d="M0.3 0.3 L3 3.2 L5.7 0.3 Z" fill="#8a8a8a"/></svg>
<div class="a" style="left:8px;top:613px;width:1020px;height:14px;background:#f0f0f0"></div>
<div class="a" style="left:7.5px;top:613px;width:1008.0px;height:13px;background:#f8f8f8;border:1px solid #b4b4b4;border-radius:6px"></div>
<div class="a" style="left:22.5px;top:613.5px;width:981.0px;height:12.0px;background:linear-gradient(#d6d6d6,#e0e0e0);border:1px solid #bcbcbc;border-radius:6px"></div>
<div class="a" style="left:35.5px;top:613.5px;width:747.0px;height:12.0px;background:linear-gradient(#f6f6f6,#fdfdfd 40%,#ededed);border:1px solid #b0b0b0;border-radius:6px"></div>
<svg class="a" style="left:14px;top:617.5px" width="3.5" height="5.5" viewBox="0 0 3.5 5.5"><path d="M3.2 0.2 L0.3 2.75 L3.2 5.3 Z" fill="#666"/></svg>
<svg class="a" style="left:1007.8px;top:617.5px" width="3.5" height="5.5" viewBox="0 0 3.5 5.5"><path d="M0.3 0.2 L3.2 2.75 L0.3 5.3 Z" fill="#666"/></svg>
<div class="a" style="left:401px;top:618px;width:1px;height:3px;background:#c8c8c8"></div>
<div class="a" style="left:403px;top:618px;width:1px;height:3px;background:#c8c8c8"></div>
<div class="a" style="left:405px;top:618px;width:1px;height:3px;background:#c8c8c8"></div>
</body></html>
